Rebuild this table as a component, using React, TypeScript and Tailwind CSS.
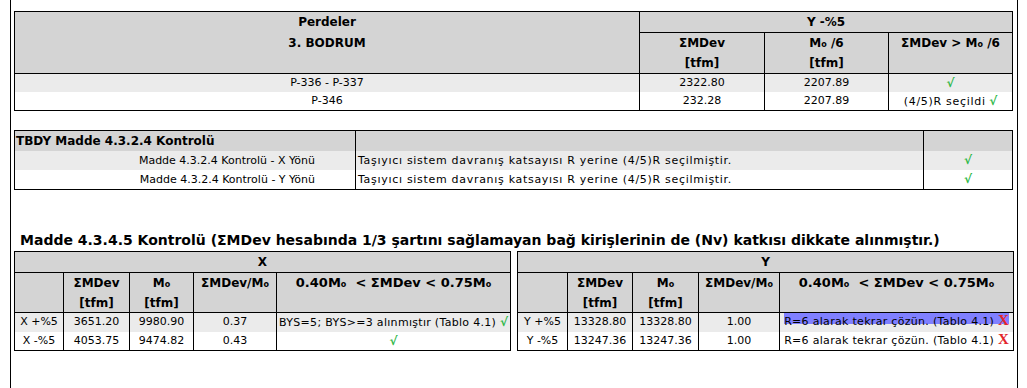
import React from "react";

const Mo = () => (
  <>
    M<span className="text-[8px] leading-[0px]">o</span>
  </>
);

const Check = () => <span className="font-bold text-[12px] text-[#2fb848] tracking-normal">√</span>;
const RedX = () => (
  <span className="font-bold text-[15px] leading-none text-[#e3262b] font-['Liberation_Serif',serif] tracking-normal">X</span>
);

const hd = "bg-[#d4d4d4] font-bold text-[12px] leading-[20px] text-center";

function SideTable({
  label,
  cols,
  rows,
}: {
  label: string;
  cols: string;
  rows: { a: string; b: string; c: string; d: string; e: React.ReactNode; hl?: boolean }[];
}) {
  return (
    <div className="border border-black w-[497px]">
      <div className={`grid ${cols}`}>
        <div className={`${hd} col-span-5 h-[21px] border-b border-black`}>{label}</div>
        <div className={`${hd} h-[40px] border-b border-black`}></div>
        <div className={`${hd} h-[40px] border-b border-l border-black`}>
          ΣMDev
          <br />
          [tfm]
        </div>
        <div className={`${hd} h-[40px] border-b border-l border-black`}>
          <Mo />
          <br />
          [tfm]
        </div>
        <div className={`${hd} h-[40px] border-b border-l border-black`}>
          ΣMDev/<Mo />
        </div>
        <div className={`${hd} h-[40px] border-b border-l border-black text-[13px]`}>
          0.40<Mo />&nbsp; &lt; ΣMDev &lt; 0.75<Mo />
        </div>
        {rows.map((r, i) => {
          const bg = i === 0 ? "bg-[#ebebeb]" : "bg-white";
          const h = i === 0 ? "h-[19px]" : "h-[18px]";
          const c = `${bg} ${h} text-center leading-[18px] whitespace-nowrap`;
          return (
            <React.Fragment key={i}>
              <div className={c}>{r.a}</div>
              <div className={`${c} border-l border-black`}>{r.b}</div>
              <div className={`${c} border-l border-black`}>{r.c}</div>
              <div className={`${c} border-l border-black`}>{r.d}</div>
              <div className={`${c} border-l border-black relative overflow-hidden`}>
                {r.hl && <div className="absolute left-[4px] right-[4px] top-0 h-[11px] bg-[#8080ff]"></div>}
                <span className="relative tracking-[0.3px]">{r.e}</span>
              </div>
            </React.Fragment>
          );
        })}
      </div>
    </div>
  );
}

export default function App() {
  return (
    <div className="bg-white h-[388px] overflow-hidden font-['DejaVu_Sans',sans-serif] text-[11px] text-black">
      <div className="ml-[10px] w-[1008px] h-[388px] border-x border-black px-[3px] pt-[11px]">
        {/* Table 1 */}
        <div className="border border-black w-[999px]">
          <div className="grid grid-cols-[624px_125px_124px_124px]">
            <div className={`${hd} row-span-2 border-b border-black leading-[21px]`}>
              Perdeler
              <br />
              3. BODRUM
            </div>
            <div className={`${hd} col-span-3 h-[21px] border-b border-l border-black`}>Y -%5</div>
            <div className={`${hd} h-[41px] border-b border-l border-black`}>
              ΣMDev
              <br />
              [tfm]
            </div>
            <div className={`${hd} h-[41px] border-b border-l border-black`}>
              <Mo /> /6
              <br />
              [tfm]
            </div>
            <div className={`${hd} h-[41px] border-b border-l border-black`}>
              ΣMDev &gt; <Mo /> /6
            </div>

            <div className="bg-[#ebebeb] h-[18px] leading-[18px] text-center">P-336 - P-337</div>
            <div className="bg-[#ebebeb] h-[18px] leading-[18px] text-center border-l border-black">2322.80</div>
            <div className="bg-[#ebebeb] h-[18px] leading-[18px] text-center border-l border-black">2207.89</div>
            <div className="bg-[#ebebeb] h-[18px] leading-[18px] text-center border-l border-black">
              <Check />
            </div>

            <div className="bg-white h-[18px] leading-[18px] text-center">P-346</div>
            <div className="bg-white h-[18px] leading-[18px] text-center border-l border-black">232.28</div>
            <div className="bg-white h-[18px] leading-[18px] text-center border-l border-black">2207.89</div>
            <div className="bg-white h-[18px] leading-[18px] text-center border-l border-black">
              <span className="tracking-[0.7px]">(4/5)R seçildi</span> <Check />
            </div>
          </div>
        </div>

        {/* Table 2 */}
        <div className="border border-black w-[999px] mt-[19px]">
          <div className="grid grid-cols-[340px_568px_89px]">
            <div className="bg-[#d4d4d4] h-[20px] leading-[20px] font-bold text-[12px] pl-[1px]">
              TBDY Madde 4.3.2.4 Kontrolü
            </div>
            <div className="bg-[#d4d4d4] h-[20px] border-l border-black"></div>
            <div className="bg-[#d4d4d4] h-[20px] border-l border-black"></div>

            <div className="bg-[#ebebeb] h-[19px] leading-[19px] text-right pr-[40px]">
              Madde 4.3.2.4 Kontrolü - X Yönü
            </div>
            <div className="bg-[#ebebeb] h-[19px] leading-[19px] pl-[2px] border-l border-black tracking-[0.7px]">
              Taşıyıcı sistem davranış katsayısı R yerine (4/5)R seçilmiştir.
            </div>
            <div className="bg-[#ebebeb] h-[19px] leading-[19px] text-center border-l border-black">
              <Check />
            </div>

            <div className="bg-white h-[19px] leading-[19px] text-right pr-[40px]">
              Madde 4.3.2.4 Kontrolü - Y Yönü
            </div>
            <div className="bg-white h-[19px] leading-[19px] pl-[2px] border-l border-black tracking-[0.7px]">
              Taşıyıcı sistem davranış katsayısı R yerine (4/5)R seçilmiştir.
            </div>
            <div className="bg-white h-[19px] leading-[19px] text-center border-l border-black">
              <Check />
            </div>
          </div>
        </div>

        {/* Title */}
        <div className="mt-[39px] h-[22px] leading-[22px] pl-[6px] font-bold text-[14px] whitespace-nowrap">
          Madde 4.3.4.5 Kontrolü (ΣMDev hesabında 1/3 şartını sağlamayan bağ kirişlerinin de (Nv) katkısı dikkate alınmıştır.)
        </div>

        {/* Tables 3 & 4 */}
        <div className="flex gap-[6px]">
          <SideTable
            label="X"
            cols="grid-cols-[48px_66px_64px_83px_234px]"
            rows={[
              {
                a: "X +%5",
                b: "3651.20",
                c: "9980.90",
                d: "0.37",
                e: (
                  <>
                    BYS=5; BYS&gt;=3 alınmıştır (Tablo 4.1) <Check />
                  </>
                ),
              },
              { a: "X -%5", b: "4053.75", c: "9474.82", d: "0.43", e: <Check /> },
            ]}
          />
          <SideTable
            label="Y"
            cols="grid-cols-[49px_65px_66px_81px_234px]"
            rows={[
              {
                a: "Y +%5",
                b: "13328.80",
                c: "13328.80",
                d: "1.00",
                hl: true,
                e: (
                  <>
                    R=6 alarak tekrar çözün. (Tablo 4.1) <RedX />
                  </>
                ),
              },
              {
                a: "Y -%5",
                b: "13247.36",
                c: "13247.36",
                d: "1.00",
                e: (
                  <>
                    R=6 alarak tekrar çözün. (Tablo 4.1) <RedX />
                  </>
                ),
              },
            ]}
          />
        </div>
      </div>
    </div>
  );
}
